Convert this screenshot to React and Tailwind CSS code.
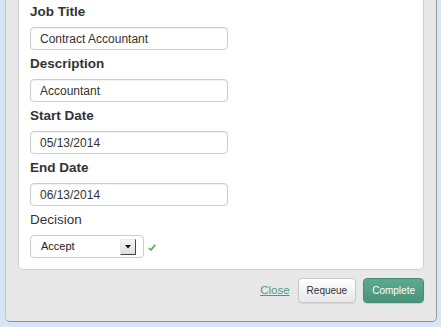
const fields = [
  { label: "Job Title", value: "Contract Accountant" },
  { label: "Description", value: "Accountant" },
  { label: "Start Date", value: "05/13/2014" },
  { label: "End Date", value: "06/13/2014" },
];

function Field({ label, value }) {
  return (
    <div className="mb-[3px]">
      <div className="mb-[6px] pt-[1px] text-[13.5px] font-bold leading-[19px] text-[#333]">{label}</div>
      <div className="flex h-[23px] w-[198px] items-center rounded-[4px] border border-[#cccccc] bg-white pl-[9px] text-[12px] text-[#333] shadow-[inset_0_1px_1px_rgba(0,0,0,0.06)]">
        {value}
      </div>
    </div>
  );
}

export default function App() {
  return (
    <div
      className="h-[327px] w-[441px] overflow-hidden bg-[#d8e5f6] pl-[5px] pr-[4px]"
      style={{ fontFamily: '"Liberation Sans", Arial, sans-serif' }}
    >
      <div className="rounded-b-[5px] border-b border-l border-r border-b-[#8f8f8f] border-l-[#c4c4c4] border-r-[#9a9a9a] bg-[#e8e8e8] px-[12px] pb-[18px]">
        <div className="rounded-b-[5px] border-x border-b border-[#d0d0d0] bg-white px-[11px] pb-[11px] pt-[1px]">
          {fields.map((f) => (
            <Field key={f.label} {...f} />
          ))}
          <div className="mb-[6px] pt-[1px] text-[13.5px] leading-[19px] text-[#333]">Decision</div>
          <div className="flex items-center gap-[4px]">
            <div className="flex h-[23px] w-[114px] items-center justify-between rounded-[4px] border border-[#cccccc] bg-white pl-[10px] pr-[7px] text-[11px] text-[#222]">
              <span>Accept</span>
              <span className="flex h-[16px] w-[16px] items-center justify-center border border-b-[#444] border-l-[#e8e8e8] border-r-[#444] border-t-[#e8e8e8] bg-gradient-to-b from-[#f4f4f4] to-[#dedede]">
                <svg width="6" height="4" viewBox="0 0 6 4">
                  <path d="M0 0h6L3 3.5z" fill="#111" />
                </svg>
              </span>
            </div>
            <svg width="8" height="7" viewBox="0 0 8 7" className="mt-[2px]">
              <path d="M0.8 4 L3 6 L7.2 0.8" fill="none" stroke="#4cae4c" strokeWidth="1.6" />
            </svg>
          </div>
        </div>
        <div className="mt-[8px] flex items-center justify-end">
          <a href="#" className="mr-[8px] text-[11.5px] text-[#4f9b82] underline">
            Close
          </a>
          <button className="mr-[7px] h-[25px] rounded-[4px] border border-[#c8c8c8] bg-gradient-to-b from-white to-[#e8e8e8] px-[8px] text-[10px] text-[#333] shadow-[0_1px_1px_rgba(0,0,0,0.08)]">
            Requeue
          </button>
          <button className="h-[25px] rounded-[4px] border border-[#468c73] bg-gradient-to-b from-[#5daa8e] to-[#4a9479] px-[8px] text-[10px] text-white shadow-[0_1px_1px_rgba(0,0,0,0.12)]">
            Complete
          </button>
        </div>
      </div>
    </div>
  );
}
